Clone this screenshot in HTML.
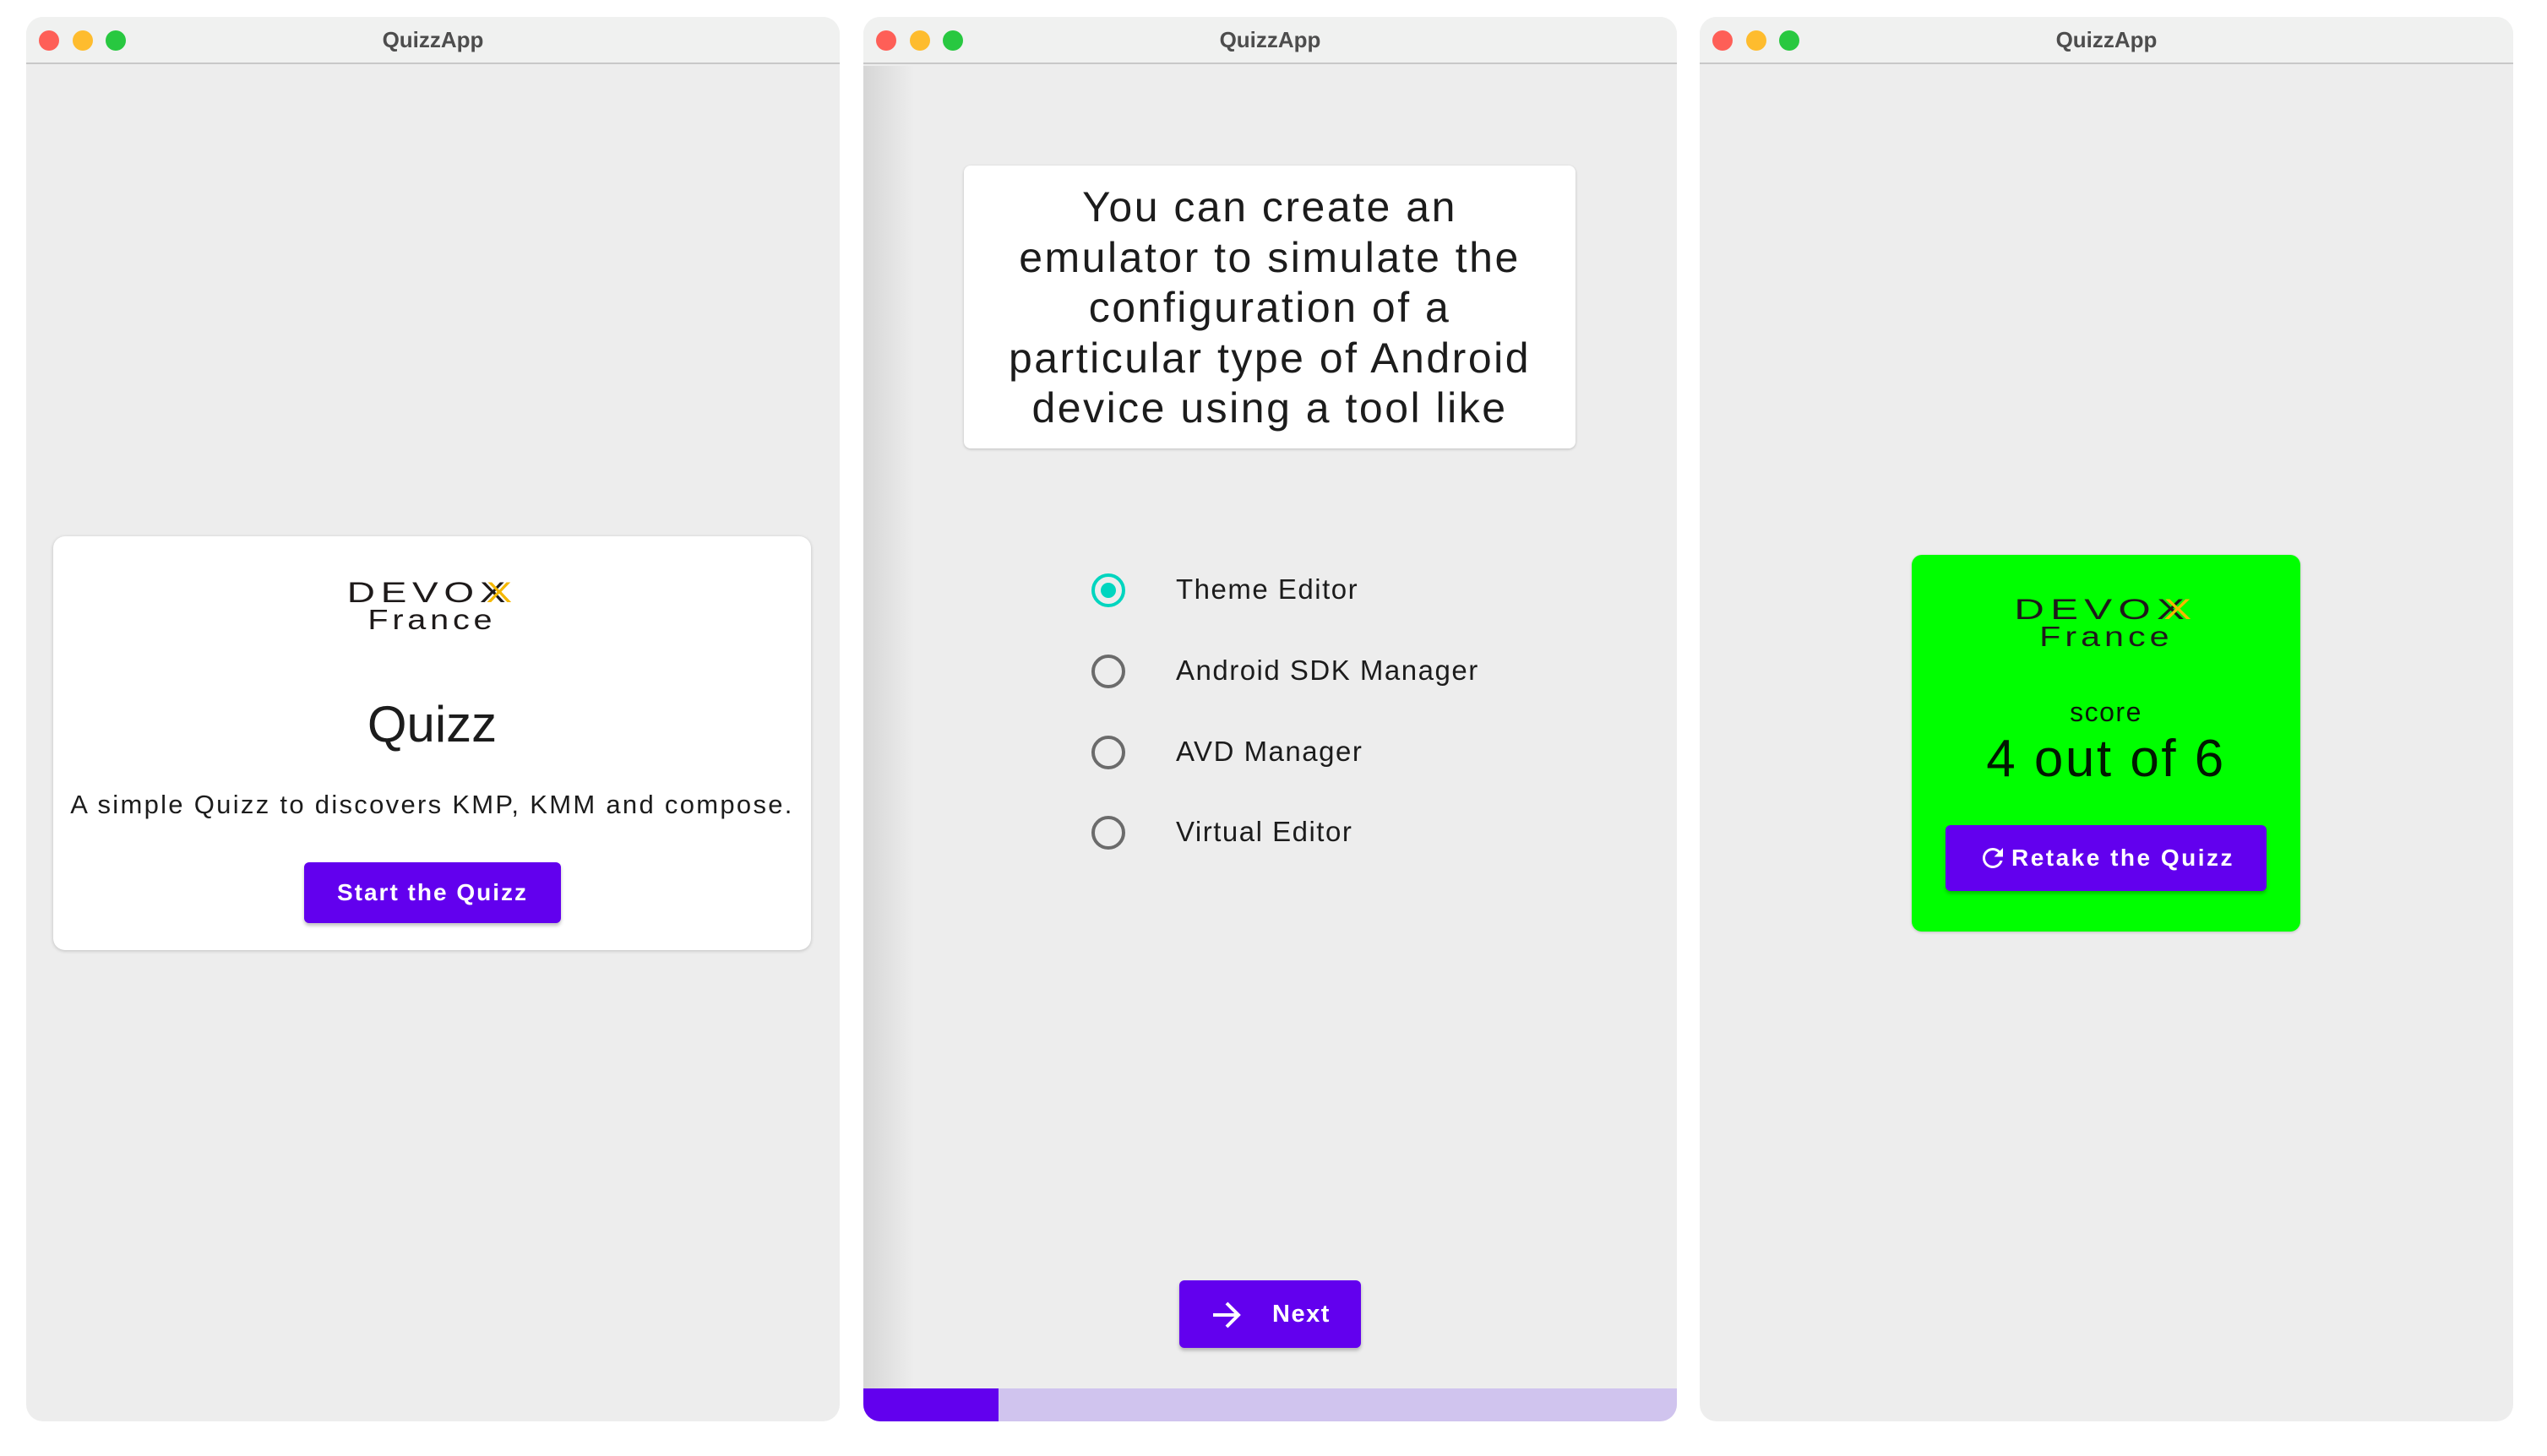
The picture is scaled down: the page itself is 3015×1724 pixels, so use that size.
<!DOCTYPE html>
<html><head><meta charset="utf-8"><style>
*{margin:0;padding:0;box-sizing:border-box}
body{width:3015px;height:1724px;background:#fff;position:relative;overflow:hidden;font-family:"Liberation Sans",sans-serif}
.win{position:absolute;top:20px;width:963px;height:1663px;background:#ededed;border-radius:20px;overflow:hidden}
.tb{position:absolute;left:0;top:0;right:0;height:56px;background:#f0f1f0;border-bottom:2px solid #c8c8c8}
.dot{position:absolute;top:16px;width:24px;height:24px;border-radius:50%}
.r{left:15px;background:#fe5f57}.y{left:55px;background:#febc2e}.g{left:94px;background:#28c840}
.tt{position:absolute;left:0;right:0;top:12px;text-align:center;font-size:26px;font-weight:bold;color:#4d4d4d}
.abs{position:absolute}
.logo{position:absolute;text-align:center;color:#1e1a1a}
.dv{font-size:34px;letter-spacing:5px;transform:scaleX(1.35);display:inline-block;line-height:30px;font-weight:bold;-webkit-text-stroke:0}
.fr{font-size:33px;letter-spacing:4px;line-height:32px;transform:scaleX(1.2);display:inline-block}
.btn{position:absolute;background:#6200ee;color:#fff;border-radius:6px;box-shadow:0 3px 4px rgba(0,0,0,.25);font-weight:bold;display:flex;align-items:center;justify-content:center}
.rad{position:absolute;left:270px;width:40px;height:40px;border-radius:50%;border:4px solid #6b6b6b}
.lab{position:absolute;left:370px;font-size:33px;letter-spacing:1.5px;color:#1c1c1c}
</style></head><body>

<div class="win" style="left:31px">
 <div class="tb"><div class="dot r"></div><div class="dot y"></div><div class="dot g"></div><div class="tt">QuizzApp</div></div>
 <div class="abs" style="left:32px;top:615px;width:897px;height:490px;background:#fff;border-radius:14px;box-shadow:0 1px 4px rgba(0,0,0,.2)">
  <div class="logo" style="left:0;right:0;top:52px"><span class="dv" style="font-weight:normal">DEVOX<span style="color:#f5b800;margin-left:-22px">X</span></span><br><span class="fr">France</span></div>
  <div class="abs" style="left:0;right:0;top:188px;text-align:center;font-size:60px;color:#1c1c1c">Quizz</div>
  <div class="abs" style="left:0;right:0;top:300px;text-align:center;font-size:31px;letter-spacing:2.3px;color:#1c1c1c">A simple Quizz to discovers KMP, KMM and compose.</div>
  <div class="btn" style="left:297px;top:386px;width:304px;height:72px;font-size:28px;letter-spacing:2px">Start the Quizz</div>
 </div>
</div>

<div class="win" style="left:1022px">
 <div class="tb"><div class="dot r"></div><div class="dot y"></div><div class="dot g"></div><div class="tt">QuizzApp</div></div>
 <div class="abs" style="left:0;top:58px;width:60px;bottom:0;background:linear-gradient(90deg,#d6d6d6,rgba(237,237,237,0))"></div>
 <div class="abs" style="left:119px;top:176px;width:724px;height:335px;background:#fff;border-radius:8px;box-shadow:0 1px 3px rgba(0,0,0,.2);text-align:center;font-size:50px;line-height:59.5px;color:#1c1c1c;padding-top:20px;letter-spacing:2.5px;white-space:nowrap">You can create an<br>emulator to simulate the<br>configuration of a<br>particular type of Android<br>device using a tool like</div>
 <div class="rad" style="top:659px;border-color:#00d5bf"><div style="position:absolute;left:7px;top:7px;width:18px;height:18px;border-radius:50%;background:#00d5bf"></div></div>
 <div class="lab" style="top:659px">Theme Editor</div>
 <div class="rad" style="top:755px"></div><div class="lab" style="top:755px">Android SDK Manager</div>
 <div class="rad" style="top:851px"></div><div class="lab" style="top:851px">AVD Manager</div>
 <div class="rad" style="top:946px"></div><div class="lab" style="top:946px">Virtual Editor</div>
 <div class="btn" style="left:374px;top:1496px;width:215px;height:80px;font-size:29px;letter-spacing:1.5px;justify-content:flex-start">
  <svg style="position:absolute;left:38px;top:24px" width="36" height="34" viewBox="0 0 36 34"><path d="M2 17H32M18 3L32 17L18 31" stroke="#fff" stroke-width="4" fill="none"/></svg>
  <span style="position:absolute;left:110px;top:24px">Next</span></div>
 <div class="abs" style="left:0;right:0;top:1624px;height:39px;background:#d0c4ee"></div>
 <div class="abs" style="left:0;width:160px;top:1624px;height:39px;background:#6200ee"></div>
</div>

<div class="win" style="left:2012px">
 <div class="tb"><div class="dot r"></div><div class="dot y"></div><div class="dot g"></div><div class="tt">QuizzApp</div></div>
 <div class="abs" style="left:251px;top:637px;width:460px;height:446px;background:#00ff00;border-radius:12px;box-shadow:0 1px 3px rgba(0,0,0,.2)">
  <div class="logo" style="left:0;right:0;top:50px"><span class="dv" style="transform:scaleX(1.45);font-weight:normal">DEVOX<span style="color:#f5b800;margin-left:-22px">X</span></span><br><span class="fr" style="transform:scaleX(1.25)">France</span></div>
  <div class="abs" style="left:0;right:0;top:168px;text-align:center;font-size:32px;letter-spacing:1.5px;color:#0a1a0a">score</div>
  <div class="abs" style="left:0;right:0;top:206px;text-align:center;font-size:62px;letter-spacing:2.5px;color:#001800">4 out of 6</div>
  <div class="btn" style="left:40px;top:320px;width:380px;height:78px;font-size:28px;letter-spacing:2.5px">
   <svg width="36" height="36" viewBox="0 0 24 24" style="margin-right:4px"><path d="M17.65 6.35A7.96 7.96 0 0 0 12 4a8 8 0 1 0 7.730 10h-2.08A6 6 0 1 1 12 6c1.66 0 3.14.69 4.22 1.78L13 11h7V4z" fill="#fff"/></svg>Retake the Quizz</div>
 </div>
</div>
</body></html>
